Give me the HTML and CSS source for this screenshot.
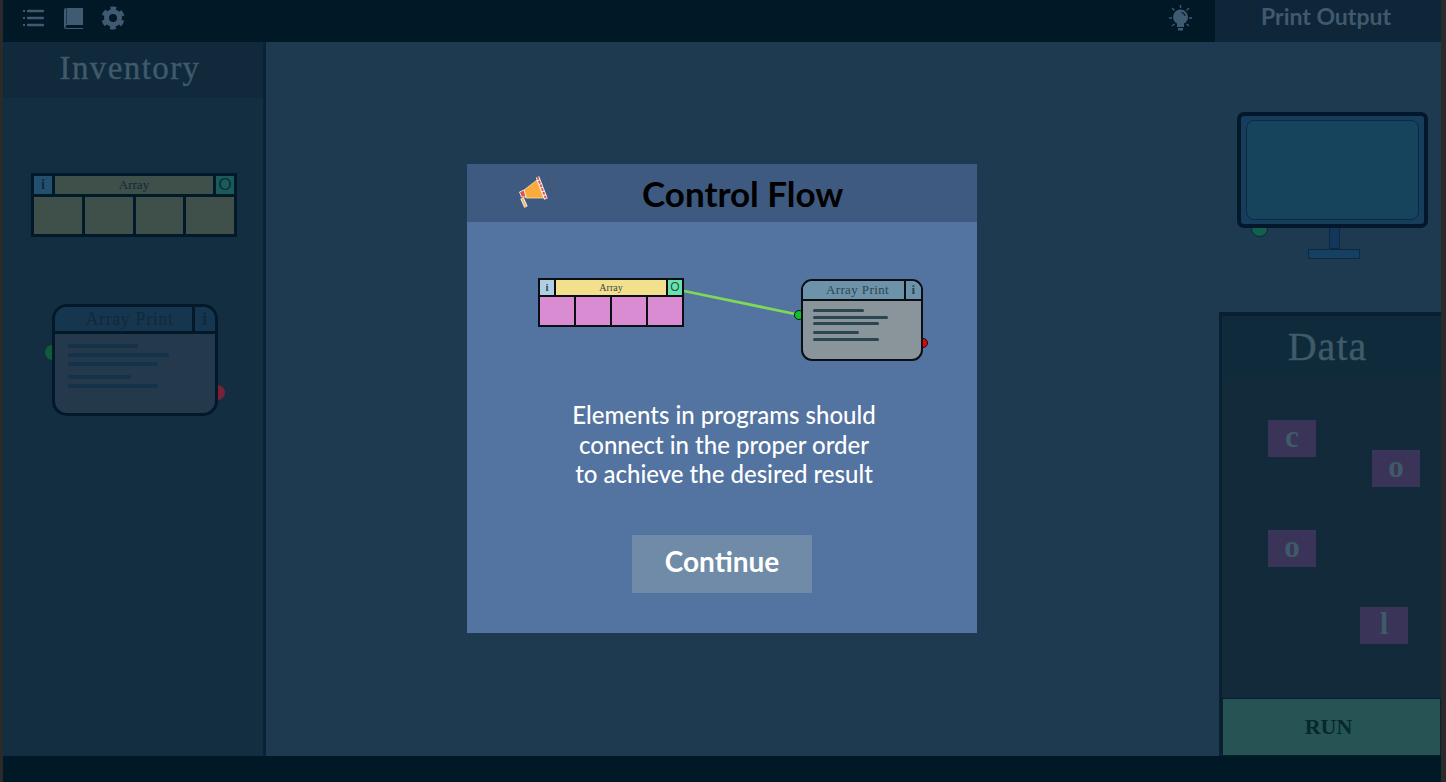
FILE: index.html
```html
<!DOCTYPE html>
<html lang="en">

<head>
    <meta charset="UTF-8">
    <title>Control Flow</title>
    <link rel="stylesheet" href="styles.css">
</head>

<body>
    <div id="frame">
        <div id="topbar">
            <div id="tools">
                <svg class="tool" width="22" height="20" viewBox="0 0 22 20">
                    <path d="M6 3H21M6 10H21M6 17H21" stroke="#3f5b72" stroke-width="2.400" stroke-linecap="round" />
                    <path d="M1 3H3M1 10H3M1 17H3" stroke="#3f5b72" stroke-width="2" />
                </svg>
                <svg class="tool" width="19" height="21" viewBox="0 0 19 21">
                    <path d="M0 2a2 2 0 0 1 2-2H19V17H3a1.500 1.500 0 0 0 0 3H19V21H2a2 2 0 0 1-2-2Z" fill="#3f5b72" />
                    <path d="M2.500 0V16" stroke="#1d3a50" stroke-width="1" />
                </svg>
                <svg class="tool" width="24" height="24" viewBox="0 0 24 24">
                    <circle cx="12" cy="12" r="6.500" fill="none" stroke="#3f5b72" stroke-width="5" />
                    <circle cx="12" cy="12" r="9.700" fill="none" stroke="#3f5b72" stroke-width="3.600" stroke-dasharray="5.600 4.560" stroke-dashoffset="-2.280" />
                </svg>
            </div>
            <svg id="bulb" width="24" height="26" viewBox="0 0 24 26">
                <path d="M11.500 0V3M3 3L5.500 5.500M20 3L17.500 5.500M0 13H3M20 13H23M3 21L5.500 19M20 21L17.500 19" stroke="#3f5b72" stroke-width="1.400" />
                <circle cx="11.500" cy="12" r="7.500" fill="#3f5b72" />
                <path d="M8 18H15V22H8ZM9 23H14V25.500H9Z" fill="#3f5b72" />
                <path d="M12.500 7.500a4 4 0 0 1 3.500 3.500" fill="none" stroke="#12293c" stroke-width="1.300" />
            </svg>
            <div id="output-tab">Print Output</div>
        </div>

        <div id="middle">
            <div id="inventory">
                <h2 class="panel-title">Inventory</h2>
                <div id="inventory-items">
                    <div class="array array-dim">
                        <div class="array-head">
                            <span class="array-info">i</span>
                            <span class="array-name">Array</span>
                            <span class="array-out">O</span>
                        </div>
                        <div class="array-cells"><span></span><span></span><span></span><span></span></div>
                    </div>
                    <div class="printer printer-dim">
                        <span class="port port-in"></span>
                        <span class="port port-out"></span>
                        <div class="printer-box">
                            <div class="printer-head"><span class="printer-name">Array Print</span><span class="printer-info">i</span></div>
                            <div class="printer-body"><i class="w1"></i><i class="w2"></i><i class="w3"></i><i class="w4"></i><i class="w3"></i></div>
                        </div>
                    </div>
                </div>
            </div>

            <div id="canvas">
                <div id="monitor">
                    <span id="monitor-port"></span>
                    <div id="bezel">
                        <div id="screen"></div>
                    </div>
                    <div id="neck"></div>
                    <div id="foot"></div>
                </div>
                <div id="data">
                    <h2 id="data-title">Data</h2>
                    <div id="data-items">
                        <span class="letter letter-a">c</span>
                        <span class="letter letter-b">o</span>
                        <span class="letter letter-c">o</span>
                        <span class="letter letter-d">l</span>
                    </div>
                    <div id="run">RUN</div>
                </div>
            </div>
        </div>

        <div id="bottombar"></div>
    </div>

    <div id="modal">
        <div id="modal-head">
            <svg id="horn" width="70" height="50" viewBox="0 0 70 50">
                <path d="M24 22L37 12L44 30L26 30Z" fill="#fbab3c" stroke="#f7dcae" stroke-width="0.800" />
                <path d="M37.500 9L46 31" stroke="#fff" stroke-width="3.600" />
                <path d="M37.500 9L46 31" stroke="#e0524c" stroke-width="2" stroke-dasharray="3 1" />
                <path d="M19.500 24L24 22L26 29L21.500 29Z" fill="#e0524c" stroke="#fff" stroke-width="0.800" />
                <path d="M22 30L26 39" stroke="#fff" stroke-width="3.600" />
                <path d="M22 30L26 39" stroke="#f5b566" stroke-width="2" />
                <path d="M46.500 12L51.500 5M50 17L56 14.500M50 22L57 24" stroke="#57505a" stroke-width="1.200" />
            </svg>
            <h1 id="modal-title">Control Flow</h1>
        </div>
        <div id="modal-body">
            <div id="diagram">
                <svg id="wire" width="510" height="170" viewBox="0 0 510 170">
                    <path d="M217 69L333 93" stroke="#7ed957" stroke-width="2.800" />
                </svg>
                <div class="array array-lit">
                    <div class="array-head">
                        <span class="array-info">i</span>
                        <span class="array-name">Array</span>
                        <span class="array-out">O</span>
                    </div>
                    <div class="array-cells"><span></span><span></span><span></span><span></span></div>
                </div>
                <div class="printer printer-lit">
                    <span class="port port-in"></span>
                    <span class="port port-out"></span>
                    <div class="printer-box">
                        <div class="printer-head"><span class="printer-name">Array Print</span><span class="printer-info">i</span></div>
                        <div class="printer-body"><i class="w1"></i><i class="w2"></i><i class="w3"></i><i class="w4"></i><i class="w3"></i></div>
                    </div>
                </div>
            </div>
            <p id="message">Elements in programs should<br>connect in the proper order<br>to achieve the desired result</p>
            <div id="continue">Continue</div>
        </div>
    </div>
</body>

</html>
```
FILE: styles.css
```css
* {
    margin: 0;
    padding: 0;
    box-sizing: border-box;
}

body {
    background: #2a2a2a;
    overflow: hidden;
    font-family: "Liberation Serif", serif;
}

#frame {
    width: 1446px;
    height: 782px;
    padding: 0 5px 0 3px;
    display: flex;
    flex-direction: column;
    position: relative;
}

/* top bar */
#topbar {
    height: 42px;
    background: #011826;
    display: flex;
    align-items: flex-start;
}

#tools {
    display: flex;
    align-items: center;
    gap: 20px;
    padding: 6px 0 0 19px;
}

#tools svg:last-child {
    margin-left: -2px;
}

#bulb {
    margin: 5px 22px 0 auto;
}

#output-tab {
    width: 226px;
    height: 42px;
    padding-right: 4px;
    background: #0f2638;
    color: #3f5a6e;
    font: bold 23px/33px Lato, sans-serif;
    text-align: center;
}

#middle {
    flex: 1;
    display: flex;
    min-height: 0;
}

#bottombar {
    height: 26px;
    background: #011826;
}

/* inventory */
#inventory {
    width: 263px;
    border-right: 3px solid #0b2234;
    background: #132e40;
    display: flex;
    flex-direction: column;
}

.panel-title {
    height: 56px;
    padding-right: 6px;
    background: #10293b;
    color: #3f5a6c;
    font-size: 33px;
    font-weight: normal;
    line-height: 53px;
    letter-spacing: 1.400px;
    text-align: center;
    -webkit-text-stroke: 0.4px #3f5a6c;
}

#inventory-items {
    flex: 1;
    position: relative;
}

/* array node */
.array {
    position: absolute;
    display: flex;
    flex-direction: column;
    font-family: "Liberation Serif", serif;
}

.array-head {
    display: flex;
}

.array-head span {
    display: block;
    text-align: center;
}

.array-name {
    flex: 1;
}

.array-out {
    font-family: "Liberation Sans", sans-serif;
}

.array-cells {
    flex: 1;
    display: grid;
    grid-template-columns: repeat(4, 1fr);
}

.array-dim {
    left: 28px;
    top: 75px;
    width: 206px;
    height: 64px;
    padding: 3px;
    gap: 3px;
    background: #02192a;
}

.array-dim .array-head {
    height: 18px;
    gap: 3px;
    font-size: 13px;
    line-height: 17px;
    color: #10293b;
}

.array-dim .array-info {
    width: 18px;
    background: #24506f;
    font-weight: bold;
    font-size: 14px;
}

.array-dim .array-name {
    background: #3e5049;
}

.array-dim .array-out {
    width: 18px;
    background: #1a5c5a;
    font-size: 17px;
}

.array-dim .array-cells {
    gap: 3px;
}

.array-dim .array-cells span {
    background: #3e5049;
}

.array-lit {
    left: 71px;
    top: 56px;
    width: 146px;
    height: 49px;
    padding: 2px;
    gap: 2px;
    background: #0b0f14;
}

.array-lit .array-head {
    height: 15px;
    gap: 2px;
    font-size: 10px;
    line-height: 15px;
    color: #3b4a4c;
}

.array-lit .array-info {
    width: 14px;
    background: #aed0e4;
    font-weight: bold;
    font-size: 11px;
}

.array-lit .array-name {
    background: #f2e08c;
}

.array-lit .array-out {
    width: 14px;
    background: #63e6ac;
    font-size: 12px;
}

.array-lit .array-cells {
    gap: 2px;
}

.array-lit .array-cells span {
    background: #da8cd2;
}

/* print node */
.printer {
    position: absolute;
    font-family: "Liberation Serif", serif;
}

.printer-box {
    position: relative;
    height: 100%;
    display: flex;
    flex-direction: column;
    overflow: hidden;
}

.printer-head {
    display: flex;
}

.printer-name {
    flex: 1;
    text-align: center;
}

.printer-info {
    font-weight: bold;
    text-align: center;
}

.printer-body {
    flex: 1;
    display: flex;
    flex-direction: column;
}

.printer-body i {
    display: block;
    border-radius: 2px;
}

.printer-body .w1 {
    width: 47.500%;
}

.printer-body .w2 {
    width: 69%;
}

.printer-body .w3 {
    width: 61%;
}

.printer-body .w4 {
    width: 43%;
}

.port {
    position: absolute;
    border-radius: 50%;
}

.printer-dim {
    left: 49px;
    top: 206px;
    width: 166px;
    height: 112px;
}

.printer-dim .printer-box {
    border: 3px solid #02192a;
    border-radius: 15px;
    background: #24394c;
}

.printer-dim .printer-head {
    height: 27px;
    background: #163650;
    border-bottom: 3px solid #02192a;
    color: #10293b;
    font-size: 18px;
    line-height: 25px;
    letter-spacing: 0.6px;
}

.printer-dim .printer-name {
    padding-left: 12px;
}

.printer-dim .printer-info {
    width: 23px;
    border-left: 3px solid #02192a;
}

.printer-dim .printer-body {
    padding: 10px 0 0 13px;
    gap: 5.500px;
}

.printer-dim .printer-body i {
    height: 3.500px;
    background: #14324a;
}

.printer-dim .printer-body .w4 {
    margin-top: 4px;
}

.printer-dim .port {
    width: 15px;
    height: 15px;
}

.printer-dim .port-in {
    left: -7px;
    top: 41px;
    background: #0e5c3e;
}

.printer-dim .port-out {
    right: -7px;
    top: 81px;
    background: #7a2037;
}

.printer-lit {
    left: 334px;
    top: 57px;
    width: 122px;
    height: 82px;
}

.printer-lit .printer-box {
    border: 2.500px solid #0b0f14;
    border-radius: 11px;
    background: #89949b;
}

.printer-lit .printer-head {
    height: 20px;
    background: #6d93aa;
    border-bottom: 2px solid #0b0f14;
    color: #2a4650;
    font-size: 13px;
    line-height: 18px;
    letter-spacing: 0.4px;
}

.printer-lit .printer-name {
    padding-left: 8px;
}

.printer-lit .printer-info {
    width: 17px;
    border-left: 2px solid #0b0f14;
}

.printer-lit .printer-body {
    padding: 8px 0 0 10px;
    gap: 3.500px;
}

.printer-lit .printer-body i {
    height: 3px;
    background: #2a4650;
}

.printer-lit .printer-body .w4 {
    margin-top: 2.500px;
}

.printer-lit .port {
    width: 10px;
    height: 10px;
}

.printer-lit .port-in {
    left: -7px;
    top: 31px;
    background: #0bc42c;
    border: 1px solid #0b0f14;
}

.printer-lit .port-out {
    right: -5px;
    top: 59px;
    background: #f00000;
    border: 1px solid #0b0f14;
}

/* canvas */
#canvas {
    flex: 1;
    background: #1e3a50;
    display: flex;
    flex-direction: column;
    align-items: flex-end;
}

#monitor {
    position: relative;
    width: 191px;
    margin: 70px 13px 0 0;
    display: flex;
    flex-direction: column;
    align-items: center;
}

#monitor-port {
    position: absolute;
    left: 14px;
    top: 108px;
    width: 17px;
    height: 17px;
    border-radius: 50%;
    background: #12604e;
    border: 1px solid #0a2a3a;
}

#bezel {
    position: relative;
    width: 191px;
    height: 116px;
    padding: 4px 5px;
    background: #173d5c;
    border: 4px solid #03192b;
    border-radius: 7px;
}

#screen {
    height: 100%;
    background: #15445c;
    border: 1.500px solid #0a2a44;
    border-radius: 8px;
}

#neck {
    width: 11px;
    height: 21px;
    margin-left: 3px;
    background: #12375a;
    border: 1px solid #0a2a44;
    border-top: 0;
}

#foot {
    width: 52px;
    height: 10px;
    margin-left: 2px;
    background: #15405f;
    border: 1px solid #0a2a44;
}

/* data panel */
#data {
    width: 222px;
    height: 444px;
    margin-top: auto;
    border-left: 3px solid #0a2030;
    border-top: 4px solid #0a2030;
    background: #132a3a;
    display: flex;
    flex-direction: column;
}

#data-title {
    height: 62px;
    padding-right: 8px;
    background: #0e2a3b;
    color: #3f5a68;
    font-size: 40px;
    font-weight: normal;
    line-height: 61px;
    letter-spacing: 1px;
    text-align: center;
    -webkit-text-stroke: 0.4px #3f5a68;
}

#data-items {
    flex: 1;
    position: relative;
}

.letter {
    position: absolute;
    width: 48px;
    height: 37px;
    background: #3a3558;
    color: #3f5a68;
    font-size: 31px;
    font-weight: bold;
    line-height: 33px;
    text-align: center;
}

.letter-a {
    left: 46px;
    top: 42px;
}

.letter-b {
    left: 150px;
    top: 72px;
}

.letter-c {
    left: 46px;
    top: 152px;
}

.letter-d {
    left: 138px;
    top: 229px;
}

#run {
    height: 58px;
    padding-right: 6px;
    background: #265353;
    border: 1px solid #0a2030;
    color: #06282c;
    font-size: 22px;
    font-weight: bold;
    line-height: 56px;
    text-align: center;
}

/* modal */
#modal {
    position: absolute;
    left: 467px;
    top: 164px;
    width: 510px;
    height: 469px;
    background: #5373a0;
    font-family: Lato, sans-serif;
}

#modal-head {
    height: 58px;
    background: #3f5a80;
    display: flex;
    align-items: center;
    padding-left: 33px;
}

#horn {
    flex: none;
    margin-top: -1px;
}

#modal-title {
    margin-left: 72px;
    color: #000;
    font-size: 35px;
    font-weight: bold;
    line-height: 58px;
    white-space: nowrap;
}

#diagram {
    position: relative;
    height: 178px;
}

#wire {
    position: absolute;
    left: 0;
    top: 0;
}

#message {
    padding-left: 4px;
    color: #fff;
    font-size: 24px;
    font-weight: 500;
    line-height: 29.500px;
    text-align: center;
}

#continue {
    width: 180px;
    height: 58px;
    margin: 46px auto 0;
    background: #6f8ba8;
    color: #fff;
    font-size: 28px;
    font-weight: bold;
    line-height: 53px;
    text-align: center;
}
```
